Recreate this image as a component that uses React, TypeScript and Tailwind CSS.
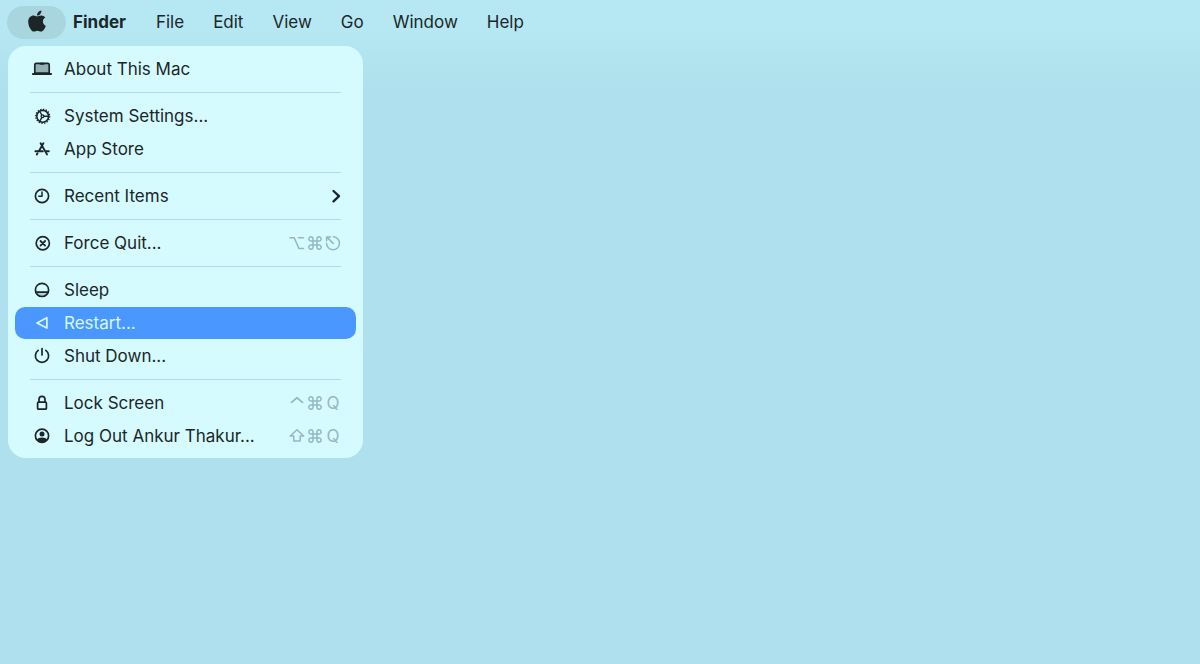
import React, { useState } from 'react';
import { FaApple } from 'react-icons/fa';

type IconName =
    | 'laptop' | 'gear' | 'appstore' | 'clock' | 'quit'
    | 'sleep' | 'restart' | 'power' | 'lock' | 'user';

type KeyName = 'option' | 'command' | 'escape' | 'control' | 'shift' | 'Q';

interface MenuItem {
    label: string;
    icon: IconName;
    keys?: KeyName[];
    submenu?: boolean;
}

const GROUPS: MenuItem[][] = [
    [{ label: 'About This Mac', icon: 'laptop' }],
    [
        { label: 'System Settings...', icon: 'gear' },
        { label: 'App Store', icon: 'appstore' },
    ],
    [{ label: 'Recent Items', icon: 'clock', submenu: true }],
    [{ label: 'Force Quit...', icon: 'quit', keys: ['option', 'command', 'escape'] }],
    [
        { label: 'Sleep', icon: 'sleep' },
        { label: 'Restart...', icon: 'restart' },
        { label: 'Shut Down...', icon: 'power' },
    ],
    [
        { label: 'Lock Screen', icon: 'lock', keys: ['control', 'command', 'Q'] },
        { label: 'Log Out Ankur Thakur...', icon: 'user', keys: ['shift', 'command', 'Q'] },
    ],
];

const BAR_ITEMS = ['File', 'Edit', 'View', 'Go', 'Window', 'Help'];

const ICONS: Record<IconName, React.ReactNode> = {
    laptop: (
        <>
            <path d="M2.8 14V5.8a1.5 1.5 0 0 1 1.5-1.5h11.4a1.5 1.5 0 0 1 1.5 1.5V14z" fill="currentColor" fillOpacity="0.35" />
            <path d="M8.5 4.8h3" strokeWidth="2" />
            <path d="M0.8 15h18.4" strokeWidth="1.8" />
        </>
    ),
    gear: (
        <>
            <circle cx="10.7" cy="10.3" r="5.9" strokeWidth="1.6" />
            <circle cx="10.7" cy="10.3" r="7" strokeWidth="1.3" strokeDasharray="1.35 1.4" strokeLinecap="butt" />
            <circle cx="10.5" cy="10.3" r="1.4" strokeWidth="1.3" />
            <path d="M12.2 10.3h4M9.8 9 7.8 5.5M9.8 11.6l-2 3.5" strokeWidth="1.4" />
        </>
    ),
    appstore: (
        <>
            <path d="M8.6 4.3 15 15.4M11.4 4.3 7 11.9M5.5 14.2l-.7 1.200" strokeWidth="1.9" />
            <path d="M3.4 12.2h7.4M14 12.2h2.8" strokeWidth="1.9" />
        </>
    ),
    clock: (
        <>
            <circle cx="10" cy="10" r="6.6" />
            <path d="M10 6v4.2H6.8" strokeWidth="1.5" />
        </>
    ),
    quit: (
        <>
            <circle cx="10.8" cy="10.3" r="6.6" />
            <path d="m8.5 8 4.600 4.600M13.100 8l-4.600 4.600" strokeWidth="1.8" />
        </>
    ),
    sleep: (
        <>
            <path d="M4 12.2h12a6.5 6.5 0 0 1-12 0z" fill="currentColor" fillOpacity="0.2" stroke="none" />
            <circle cx="10" cy="9.9" r="6.6" />
            <path d="M4 12.2h12" />
        </>
    ),
    restart: <path d="M5 9.900 14.900 4.700v10.400z" />,
    power: (
        <>
            <path d="M6.2 4.4a6.6 6.6 0 1 0 7.6 0" />
            <path d="M10 2.6v6.4" />
        </>
    ),
    lock: (
        <>
            <rect x="5.6" y="9.2" width="8.8" height="7" rx="1" />
            <path d="M7 9.2V6.4a3 3 0 0 1 6 0v2.8" />
        </>
    ),
    user: (
        <>
            <circle cx="10" cy="9.7" r="6.6" />
            <circle cx="10" cy="8" r="2.5" fill="currentColor" stroke="none" />
            <path d="M4.8 13.6c1-1.4 3-2.2 5.2-2.2s4.2.8 5.2 2.2a6.5 6.5 0 0 1-10.4 0z" fill="currentColor" stroke="none" />
        </>
    ),
};

const KEYS: Record<Exclude<KeyName, 'Q'>, React.ReactNode> = {
    option: <path d="M1 2.800h4.200l4.700 10.600h4.600M9.500 2.800h5" />,
    command: (
        <path d="M6 6h4v4H6zM6 6H4.200A2.100 2.100 0 1 1 6 4.200zM10 6V4.200A2.100 2.100 0 1 1 11.800 6zM10 10h1.800A2.100 2.100 0 1 1 10 11.800zM6 10v1.800A2.100 2.100 0 1 1 4.200 10z" />
    ),
    escape: (
        <>
            <path d="M8.500 1.700A6.500 6.500 0 1 1 1.500 8.200" />
            <path d="M8.200 8.400 2.400 2.600M1.600 5.800V1.900h3.900" />
        </>
    ),
    control: <path d="M2.500 7.400 8 2.800l5.500 4.600" strokeWidth="1.800" />,
    shift: <path d="M8 1.800 1.300 8h3.500v5h6.400V8h3.500z" />,
};

function Icon({ name }: { name: IconName }) {
    return (
        <svg viewBox="0 0 20 20" className="size-5 shrink-0" fill="none" stroke="currentColor" strokeWidth="1.7" strokeLinecap="round" strokeLinejoin="round" aria-hidden="true">
            {ICONS[name]}
        </svg>
    );
}

function Key({ name }: { name: KeyName }) {
    if (name === 'Q') {
        return <span className="w-4 pt-0.5 text-center">Q</span>;
    }
    return (
        <svg viewBox="0 0 16 16" className="size-4" fill="none" stroke="currentColor" strokeWidth="1.5" strokeLinecap="round" strokeLinejoin="round" role="img" aria-label={name}>
            {KEYS[name]}
        </svg>
    );
}

function App() {
    const [active, setActive] = useState('Restart...');

    return (
        <div className="min-h-screen bg-[#afe0ed] bg-linear-to-b from-[#b5e8f2] from-[30px] to-[#afe0ed] to-[90px] font-['Inter','Liberation_Sans',sans-serif] text-[17px] text-[#1c2629]">
            <nav className="flex items-center gap-px px-[7px] pt-1.5 pb-[7px]">
                <button aria-label="Apple menu" aria-expanded="true" className="flex h-[33px] w-[59px] items-center justify-center rounded-full bg-[#a9d5df] pb-1">
                    <FaApple className="size-6" />
                </button>
                <button className="pr-[15px] pl-1.5 font-bold">Finder</button>
                {BAR_ITEMS.map(item => (
                    <button key={item} className="px-3.5">{item}</button>
                ))}
            </nav>

            <div role="menu" className="ml-2 flex w-[355px] flex-col gap-px rounded-[18px] bg-[#d5fbff] px-[7px] pt-[7px] pb-1.5">
                {GROUPS.map((group, i) => (
                    <React.Fragment key={i}>
                        {i > 0 && <hr className="mx-[15px] my-1.5 h-px border-0 bg-[#aedde9]" />}
                        {group.map(item => (
                            <button
                                key={item.label}
                                role="menuitem"
                                onMouseEnter={() => setActive(item.label)}
                                className={`flex h-8 items-center gap-3 rounded-[10px] pr-[15px] pl-[17px] text-left ${active === item.label ? 'bg-[#4a98ff] text-[#d8f8ff]' : ''}`}
                            >
                                <Icon name={item.icon} />
                                <span className="flex-1 pt-0.5">{item.label}</span>
                                {item.submenu && (
                                    <svg viewBox="0 0 12 16" className="h-4 w-3" fill="none" stroke="currentColor" strokeWidth="2.3" strokeLinecap="round" strokeLinejoin="round" aria-hidden="true">
                                        <path d="m4.500 3 5.500 5.200-5.500 5.200" />
                                    </svg>
                                )}
                                {item.keys && (
                                    <kbd className="flex items-center gap-0.5 font-['Inter','Liberation_Sans',sans-serif] text-[17px] text-[#94b8c0]">
                                        {item.keys.map(key => <Key key={key} name={key} />)}
                                    </kbd>
                                )}
                            </button>
                        ))}
                    </React.Fragment>
                ))}
            </div>
        </div>
    );
}

export default App;
